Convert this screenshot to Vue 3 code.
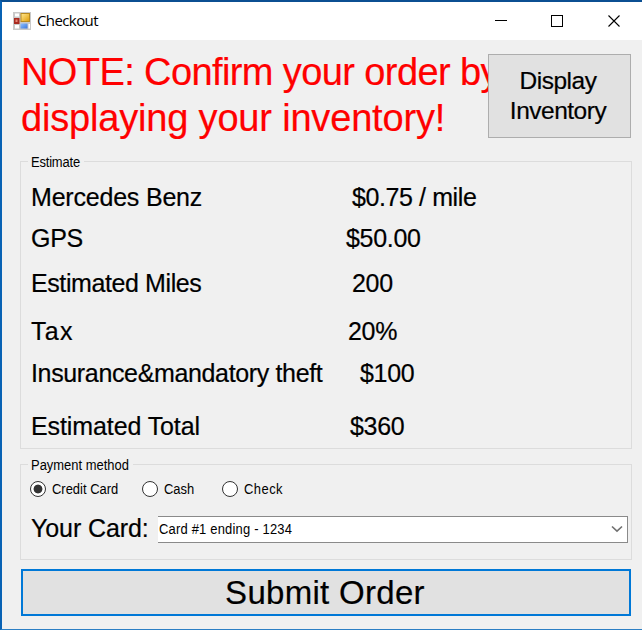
<script setup>
import { ref } from 'vue'

const rows = [
  { id: 'car', label: 'Mercedes Benz', value: '$0.75 / mile' },
  { id: 'gps', label: 'GPS', value: '$50.00' },
  { id: 'miles', label: 'Estimated Miles', value: '200' },
  { id: 'tax', label: 'Tax', value: '20%' },
  { id: 'insurance', label: 'Insurance&mandatory theft', value: '$100' },
  { id: 'total', label: 'Estimated Total', value: '$360' },
]
const methods = ['Credit Card', 'Cash', 'Check']
const method = ref('Credit Card')
</script>

<template>
  <div class="window">
    <header class="titlebar">
      <svg class="app-icon" width="18" height="18" viewBox="0 0 18 18">
        <defs>
          <linearGradient id="gold" x1="0" y1="0" x2="1" y2="1">
            <stop offset="0" stop-color="#ffe58a" />
            <stop offset="1" stop-color="#e0a010" />
          </linearGradient>
          <linearGradient id="azure" x1="0" y1="0" x2="1" y2="1">
            <stop offset="0" stop-color="#8fc0ff" />
            <stop offset="1" stop-color="#3c78dc" />
          </linearGradient>
        </defs>
        <rect width="18" height="18" fill="#c9c9c9" />
        <path d="M2 1.500h4v3H2zM2 13h4v3.500H2zM15.500 12h1.500v4.500h-1.500z" fill="#fff" />
        <rect x="7.500" y="1" width="9.500" height="9" fill="#b88a20" />
        <rect x="8.500" y="2" width="7.500" height="7" fill="url(#gold)" />
        <rect x="1" y="6" width="5.500" height="6" fill="#a82a20" />
        <rect x="2.500" y="7.500" width="2" height="2.500" fill="#e88878" />
        <rect x="7.500" y="11.500" width="7" height="5" fill="url(#azure)" />
      </svg>
      <span class="title">Checkout</span>
      <svg class="controls" width="128" height="14" viewBox="0 0 128 14">
        <path d="M0 6.500h12" stroke="#000" fill="none" />
        <rect x="56.500" y="1.500" width="11" height="11" stroke="#000" fill="none" />
        <path d="M113.500 1.500l11 11M124.500 1.500l-11 11" stroke="#000" fill="none" stroke-width="1.100" />
      </svg>
    </header>

    <main class="body">
      <section class="top">
        <h1 class="note"><span class="note-first">NOTE: Confirm your order by</span><br />displaying your inventory!</h1>
        <button class="display">Display<br />Inventory</button>
      </section>

      <section class="group estimate">
        <div class="legend"><span class="small caption">Estimate</span></div>
        <div v-for="row in rows" :key="row.id" class="row" :class="row.id">
          <span class="label">{{ row.label }}</span>
          <span class="value">{{ row.value }}</span>
        </div>
      </section>

      <section class="group payment">
        <div class="legend wide"><span class="small caption">Payment method</span></div>
        <div class="methods">
          <label v-for="m in methods" :key="m" class="method" @click="method = m">
            <span class="radio" :class="{ on: method === m }"></span>
            <span class="small">{{ m }}</span>
          </label>
        </div>
        <div class="card-row">
          <span class="card-label">Your Card:</span>
          <div class="select">
            <span class="small chosen">Card #1 ending - 1234</span>
            <svg width="12" height="8" viewBox="0 0 12 8">
              <path d="M1 1.500l5 4.700 5-4.700" fill="none" stroke="#707070" stroke-width="1.600" />
            </svg>
          </div>
        </div>
      </section>

      <button class="submit">Submit Order</button>
    </main>
  </div>
</template>

<style>
body {
  margin: 0;
  overflow: hidden;
}
</style>

<style scoped>
.window {
  box-sizing: border-box;
  width: 642px;
  height: 630px;
  display: flex;
  flex-direction: column;
  border-top: 2px solid #0b4f92;
  border-left: 2px solid #0862b4;
  border-bottom: 1px solid #2c7fc4;
  background: #f0f0f0;
  color: #000;
  font-family: "Liberation Sans", Arial, sans-serif;
}
.titlebar {
  height: 38px;
  flex: none;
  display: flex;
  align-items: center;
  padding: 0 19px 0 11px;
  box-sizing: border-box;
  background: #fff;
}
.app-icon {
  margin-top: -1px;
}
.title {
  margin: -2px 0 0 6px;
  font: 15px/20px "Open Sans", "Noto Sans", sans-serif;
  letter-spacing: -0.6px;
}
.controls {
  margin: -1px 0 0 auto;
}
.body {
  flex: 1;
  display: flex;
  flex-direction: column;
  padding: 14px 10px 0 18px;
}
.top {
  display: flex;
  height: 100px;
  padding-right: 1px;
}
.note {
  flex: 1;
  min-width: 0;
  height: 90px;
  margin: -5px 0 0;
  padding-left: 1px;
  white-space: nowrap;
  font-weight: 400;
  font-size: 38px;
  line-height: 46px;
  letter-spacing: -0.180px;
  color: #f00;
  -webkit-text-stroke: 0.2px;
}
.note-first {
  letter-spacing: -0.600px;
}
.display {
  position: relative;
  width: 143px;
  height: 84px;
  flex: none;
  padding: 0 3px 0 0;
  border: 1px solid #adadad;
  background: #e1e1e1;
  color: #000;
  font: 24.500px/30px "Liberation Sans", Arial, sans-serif;
  letter-spacing: -0.500px;
  -webkit-text-stroke: 0.2px;
}
.group {
  box-sizing: border-box;
  border: 1px solid #dcdcdc;
}
.legend {
  width: 56px;
  height: 16px;
  margin: -8px 0 0 7px;
  padding-left: 3px;
  box-sizing: border-box;
  background: #f0f0f0;
}
.legend.wide {
  width: 105px;
}
.small {
  display: inline-block;
  font-size: 14px;
  line-height: 16px;
  white-space: nowrap;
  transform: scaleX(0.925);
  transform-origin: left;
}
.caption {
  display: block;
}
.estimate .caption {
  letter-spacing: -0.200px;
}
.chosen {
  letter-spacing: 0.220px;
}
.estimate {
  height: 288px;
  margin-top: 7px;
}
.row {
  display: flex;
  height: 30px;
  padding-left: 10px;
  font-size: 25px;
  line-height: 30px;
  letter-spacing: -0.300px;
  white-space: nowrap;
  -webkit-text-stroke: 0.2px;
}
.label {
  width: 321px;
  flex: none;
}
.row.car { margin-top: 12px; }
.row.gps { margin-top: 11px; }
.row.miles { margin-top: 15px; }
.row.tax { margin-top: 18px; }
.row.insurance { margin-top: 12px; }
.row.total { margin-top: 23px; }
.car .label { letter-spacing: -0.200px; }
.car .value { letter-spacing: -0.400px; }
.gps .label { width: 315px; }
.miles .label { letter-spacing: -0.400px; }
.tax .label { width: 317px; letter-spacing: 1.300px; }
.insurance .label { width: 329px; letter-spacing: -0.350px; }
.total .label { width: 319px; letter-spacing: -0.100px; }
.payment {
  height: 96px;
  margin-top: 15px;
}
.methods {
  display: flex;
  align-items: center;
  height: 18px;
  margin-top: 7px;
  padding-left: 9px;
}
.method {
  display: flex;
  align-items: center;
  gap: 6px;
  width: 112px;
}
.method:nth-child(2) {
  width: 80px;
}
.method:nth-child(3) .small {
  letter-spacing: 0.500px;
}
.radio {
  box-sizing: border-box;
  width: 16px;
  height: 16px;
  flex: none;
  border: 1px solid #333;
  border-radius: 50%;
  background: #fff;
}
.radio.on {
  background: radial-gradient(circle, #333 0 4px, #fff 4.800px);
}
.card-row {
  display: flex;
  align-items: flex-start;
  margin-top: 15px;
  padding: 0 3px 0 10px;
}
.card-label {
  width: 127px;
  flex: none;
  font-size: 25px;
  line-height: 30px;
  letter-spacing: -0.100px;
  white-space: nowrap;
  -webkit-text-stroke: 0.2px;
}
.select {
  flex: 1;
  height: 27px;
  box-sizing: border-box;
  margin-top: 3px;
  padding: 0 4px 2px 1px;
  display: flex;
  align-items: center;
  justify-content: space-between;
  border: solid #8a8a8a;
  border-width: 1px 1px 1px 0;
  background: #fff;
}
.submit {
  height: 47px;
  margin: 9px 1px 0 1px;
  padding: 1px 2px 0 0;
  border: 2px solid #0078d7;
  background: #e1e1e1;
  color: #000;
  font: 33px/40px "Liberation Sans", Arial, sans-serif;
  letter-spacing: 0.300px;
  -webkit-text-stroke: 0.2px;
}
</style>
